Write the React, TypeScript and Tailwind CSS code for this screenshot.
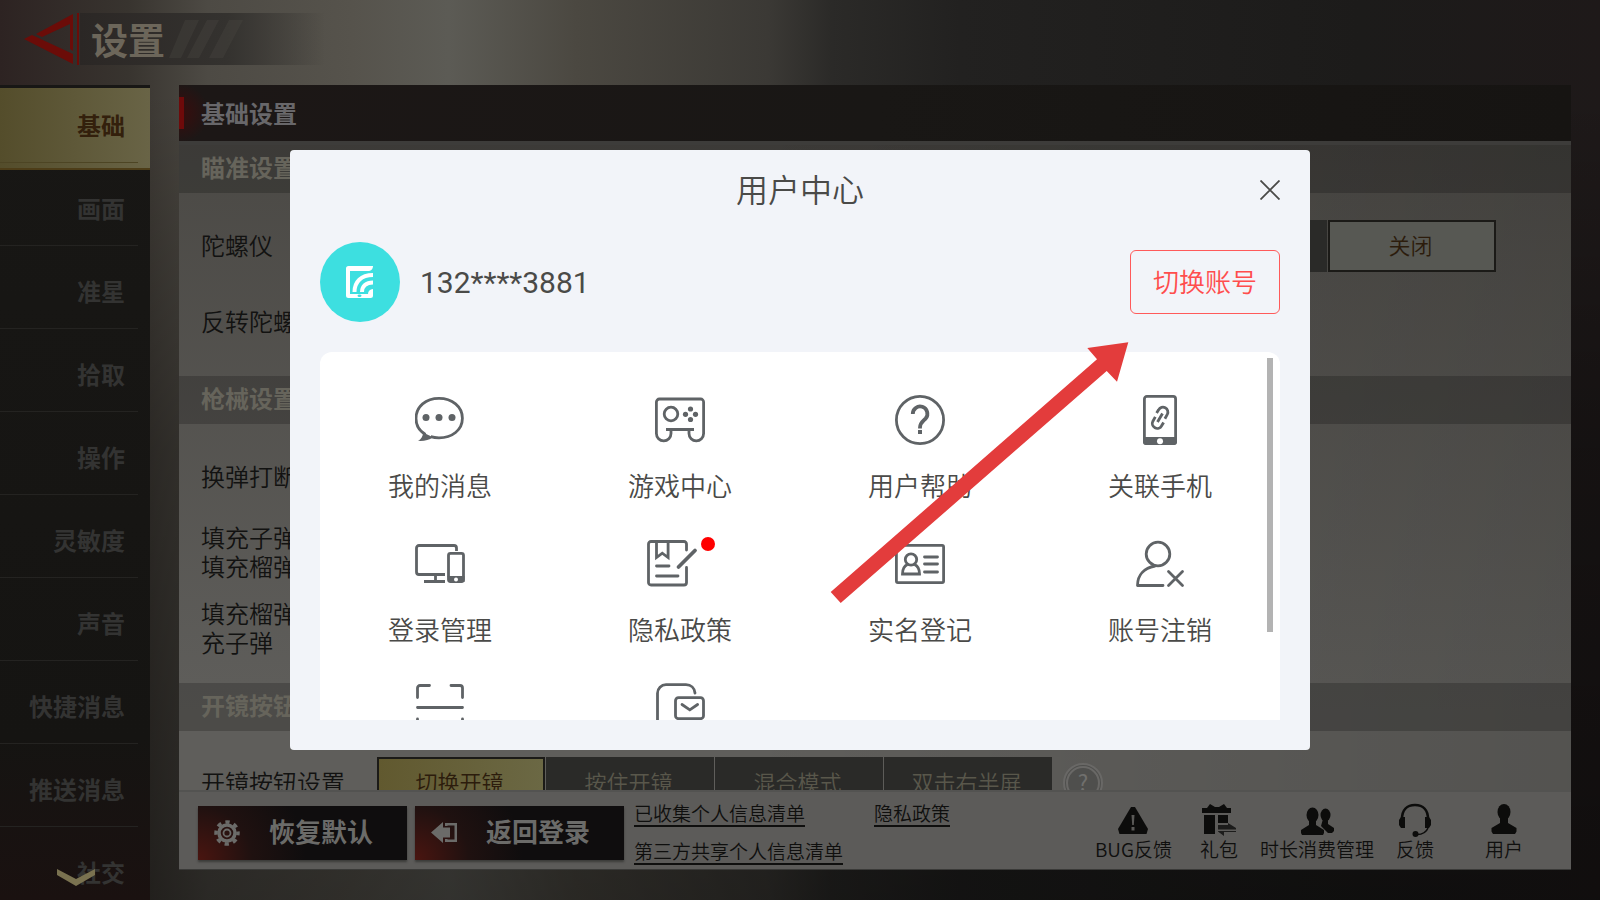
import React, { useState } from "react";
import { clsx } from "clsx";

const tabs = ["基础", "画面", "准星", "拾取", "操作", "灵敏度", "声音", "快捷消息", "推送消息", "社交"];

interface IconProps {
    className?: string;
}

/* ---------- Icons of the user center ---------- */

const MessageIcon = () => (
    <svg viewBox="0 0 50 50" className="size-[50px]" fill="none" stroke="currentColor" strokeWidth="2.8">
        <path d="M10.500 39.500C4.500 36 1 30.500 1 23.500 1 11.500 11 3.300 24 3.300s23.400 8.200 23.400 20S37 42.900 24 42.900c-3 0-5.800-.4-8.300-1.200" />
        <path d="M8 37.500l10 4.700c-4 2.900-9 4-15 3.600 3.200-1.600 5-4.300 5-8.300z" fill="currentColor" stroke="none" />
        <circle cx="11" cy="22.500" r="3.500" fill="currentColor" stroke="none" />
        <circle cx="24" cy="22.500" r="3.500" fill="currentColor" stroke="none" />
        <circle cx="37" cy="22.500" r="3.500" fill="currentColor" stroke="none" />
    </svg>
);

const GameIcon = () => (
    <svg viewBox="0 0 50 50" className="size-[50px]" fill="none" stroke="currentColor" strokeWidth="2.8">
        <path d="M16 34.500v4a7.300 7.300 0 0 1-14.600 0V7a3 3 0 0 1 3-3h41.200a3 3 0 0 1 3 3v31.500a7.300 7.300 0 0 1-14.600 0v-4" />
        <path d="M11 34.500h28" />
        <circle cx="16" cy="19" r="6.800" />
        <g fill="currentColor" stroke="none">
            <circle cx="35.500" cy="14" r="2.600" />
            <circle cx="35.500" cy="24.500" r="2.600" />
            <circle cx="30.500" cy="19.300" r="2.600" />
            <circle cx="40.500" cy="19.300" r="2.600" />
        </g>
    </svg>
);

const HelpIcon = () => (
    <svg viewBox="0 0 50 50" className="size-[50px]" fill="none" stroke="currentColor" strokeWidth="2.8">
        <circle cx="25" cy="25" r="23.600" />
        <path d="M17.800 19a7.300 7.300 0 1 1 13 4.300c-2.200 2.600-5.800 4.200-5.800 9.200v1" strokeWidth="3.800" />
        <path d="M23 35h4v4h-4z" fill="currentColor" stroke="none" />
    </svg>
);

const PhoneIcon = () => (
    <svg viewBox="0 0 50 50" className="size-[50px]" fill="none" stroke="currentColor" strokeWidth="2.8">
        <rect x="9.400" y="1.400" width="31.200" height="47.200" rx="2.500" />
        <path d="M8 42h34v5a3 3 0 0 1-3 3H11a3 3 0 0 1-3-3z" fill="currentColor" stroke="none" />
        <circle cx="25" cy="46.200" r="3" fill="#fff" stroke="none" />
        <path d="M21.600 18l2-3.200a4.900 4.900 0 0 1 8.700 4.600l-2.400 4.300M28.600 27.500l-2 3.300a4.900 4.900 0 0 1-8.700-4.600l2.400-4.300M27.500 18.500l-5 8.500" />
    </svg>
);

const DeviceIcon = () => (
    <svg viewBox="0 0 50 50" className="size-[50px]" fill="none" stroke="currentColor" strokeWidth="2.8">
        <path d="M41.500 12V9a2.500 2.500 0 0 0-2.500-2.500H4A2.500 2.500 0 0 0 1.500 9v24A2.500 2.500 0 0 0 4 35.500h26M20.500 36v7M9 42.500h21" />
        <rect x="33.500" y="14.300" width="15" height="28.200" rx="2" />
        <path d="M32.500 37h17v6H34z" fill="currentColor" stroke="none" />
        <circle cx="41" cy="40.500" r="2" fill="#fff" stroke="none" />
    </svg>
);

const PolicyIcon = () => (
    <svg viewBox="0 0 50 50" className="size-[50px] overflow-visible" fill="none" stroke="currentColor" strokeWidth="2.8" strokeLinecap="round">
        <path d="M31.500 11V5A2.500 2.500 0 0 0 29 2.500H-4A2.500 2.500 0 0 0-6.500 5v38.500A2.500 2.500 0 0 0-4 46h33a2.500 2.500 0 0 0 2.500-2.500v-15" />
        <path d="M1.500 3v15.500l5.800-4.300 5.800 4.300V3" />
        <path d="M1.500 27H14M1.500 37H23" />
        <path d="M23.500 28L40 11.500" strokeWidth="3.800" />
    </svg>
);

const IdCardIcon = () => (
    <svg viewBox="0 0 50 50" className="size-[50px]" fill="none" stroke="currentColor" strokeWidth="2.8">
        <rect x="1.400" y="6.400" width="47.200" height="37.200" rx="1.500" />
        <circle cx="16" cy="20.500" r="5.700" />
        <path d="M12.500 25.500c-3.500 1.500-5 5-5 9.500h17c0-4.500-1.500-8-5-9.500" />
        <path d="M29.500 18h13M29.500 25h13M29.500 33h13" strokeLinecap="round" />
    </svg>
);

const UserRemoveIcon = () => (
    <svg viewBox="0 0 50 50" className="size-[50px]" fill="none" stroke="currentColor" strokeWidth="2.8" strokeLinecap="round" strokeLinejoin="round">
        <circle cx="23" cy="15" r="11.800" />
        <path d="M20 27C9.500 29 2.500 35.500 2.500 46.500H28" />
        <path d="M33.500 32.500l14 14M47.500 32.500l-14 14" />
    </svg>
);

const ScanIcon = () => (
    <svg viewBox="0 0 50 50" className="size-[50px]" fill="none" stroke="currentColor" strokeWidth="2.8" strokeLinecap="round">
        <path d="M2.500 14.500V5A2.500 2.500 0 0 1 5 2.500h9.500M36 2.500h9A2.500 2.500 0 0 1 47.500 5v9.500M2.500 24.500h45M2.500 36v9A2.500 2.500 0 0 0 5 47.500h9.500M47.500 36v9a2.500 2.500 0 0 1-2.500 2.500h-9" />
    </svg>
);

const MailIcon = () => (
    <svg viewBox="0 0 50 50" className="size-[50px]" fill="none" stroke="currentColor" strokeWidth="2.8" strokeLinecap="round">
        <path d="M40 10c-.5-5-4-8.300-9-8.300H11a8.500 8.500 0 0 0-8.500 8.500V40a8.500 8.500 0 0 0 8.500 8.500h20a8.500 8.500 0 0 0 8.500-8.500" />
        <rect x="20.500" y="14.700" width="28" height="21" rx="3" />
        <path d="M27 21.500l7.800 5.300 7.800-5.300" />
    </svg>
);

/* ---------- Icons of the game settings ---------- */

const BackIcon = ({ className }: IconProps) => (
    <svg viewBox="0 0 56 52" className={className} fill="#6b0c08">
        <path d="M49 1v37l-3-2V11L18 24l-6-3z" />
        <path d="M0 26l8-4 41 19v10z" />
        <path d="M53 0h2v52h-2z" />
    </svg>
);

const GearIcon = () => (
    <svg viewBox="0 0 26 26" className="size-[26px]" fill="none" stroke="#6b6b69">
        <circle cx="13" cy="13" r="11" strokeWidth="3.500" strokeDasharray="4.300 4.340" strokeDashoffset="2" />
        <circle cx="13" cy="13" r="8" strokeWidth="3.500" />
        <circle cx="13" cy="13" r="3.500" strokeWidth="1.800" />
    </svg>
);

const LogoutIcon = () => (
    <svg viewBox="0 0 26 26" className="size-[26px]" fill="#6b6b69">
        <path d="M0 12.500L12 2v5.500h7v10h-7V23z" />
        <path d="M14 3h12v19H14v-3h2.500v.5h7v-14h-7V6H14z" />
    </svg>
);

const WarnIcon = () => (
    <svg viewBox="0 0 34 34" className="size-[34px]" fill="#0c0c0b">
        <path d="M15 4h4l13 22-1.500 5h-27L2 26z" />
        <path d="M15.500 12h3l-.7 10h-1.600zM15.500 24h3v3.500h-3z" fill="#5a5957" />
    </svg>
);

const GiftIcon = () => (
    <svg viewBox="0 0 34 34" className="size-[34px]">
        <g fill="#0c0c0b">
            <path d="M0 5h5l3-4 5 3h4l5-3 3 4h4v5H0z" />
            <path d="M2 12h11v19H2zM16 12h10v8H16z" />
        </g>
        <path d="M16 22h10v-2l8 5v1.500H16zM34 29H22v4l-6-4.500V28h18z" fill="#1c1c1b" />
    </svg>
);

const PeopleIcon = () => (
    <svg viewBox="0 0 34 34" className="size-[34px]" fill="#0c0c0b">
        <ellipse cx="25.500" cy="12" rx="5" ry="6.500" />
        <path d="M23 16h5v5l6 4v3l-2 2h-4l-7-7z" />
        <ellipse cx="12.500" cy="12" rx="6" ry="7.500" />
        <path d="M9 17h7v5l8 5v3l-1 2H2l-1-2v-3l8-5z" />
    </svg>
);

const HeadsetIcon = () => (
    <svg viewBox="0 0 34 34" className="size-[34px]" fill="#0c0c0b">
        <path d="M4 16C4 7 9 2 17 2s13 5 13 14" fill="none" stroke="#0c0c0b" strokeWidth="2.6" />
        <path d="M1 17l2-3h4v11H3l-2-3zM33 17l-2-3h-4v11h4l2-3z" />
        <path d="M30 25c-2 5-6 6.500-11 6.500" fill="none" stroke="#0c0c0b" strokeWidth="1.500" />
        <circle cx="17.500" cy="31" r="3" />
    </svg>
);

const PersonIcon = () => (
    <svg viewBox="0 0 34 34" className="size-[34px]" fill="#0c0c0b">
        <ellipse cx="17" cy="9" rx="6.500" ry="8" />
        <path d="M13 14h8v6l8.500 5v3.500L28 31H6l-1.500-2.500V25l8.500-5z" />
    </svg>
);

const services = [
    { label: "我的消息", icon: <MessageIcon /> },
    { label: "游戏中心", icon: <GameIcon /> },
    { label: "用户帮助", icon: <HelpIcon /> },
    { label: "关联手机", icon: <PhoneIcon /> },
    { label: "登录管理", icon: <DeviceIcon /> },
    { label: "隐私政策", icon: <PolicyIcon />, unread: true },
    { label: "实名登记", icon: <IdCardIcon /> },
    { label: "账号注销", icon: <UserRemoveIcon /> },
    { label: "扫一扫", icon: <ScanIcon /> },
    { label: "联系客服", icon: <MailIcon /> },
];

interface OptionsProps {
    items: string[];
    active: string;
    light?: boolean;
}

// Segmented buttons of one setting
const Options: React.FC<OptionsProps> = ({ items, active, light }) => (
    <div className="flex gap-px">
        {items.map((item) => (
            <button
                key={item}
                type="button"
                className={clsx(
                    "h-[52px] w-[168px] pr-[3px] pb-[5px] text-[22px] leading-none font-[350]",
                    item !== active && "bg-[#2a2a28] text-[#59574b]",
                    item === active && "border-2 border-[#1b1a17] text-[#2c1c0c]",
                    item === active && (light ? "bg-[#575853]" : "bg-linear-to-r from-[#61592f] to-[#6b6844]")
                )}
            >
                {item}
            </button>
        ))}
    </div>
);

const SectionTitle: React.FC<{ children: React.ReactNode }> = ({ children }) => (
    <h3 className="flex h-12 items-center bg-black/20 px-[22px] pb-[5px] text-2xl font-bold text-[#66645b]">{children}</h3>
);

const Row: React.FC<{ label: string; children?: React.ReactNode }> = ({ label, children }) => (
    <div className="flex h-[76px] items-center px-[22px]">
        <span className="w-[176px] shrink-0 pb-1 text-2xl leading-[29px] font-[350] whitespace-pre-line text-[#121211]">{label}</span>
        {children}
    </div>
);

const FootButton: React.FC<{ label: string; icon: React.ReactNode }> = ({ label, icon }) => (
    <button
        type="button"
        className="flex h-[54px] w-[209px] items-center bg-[#0f0d0e] bg-[radial-gradient(circle_at_0%_100%,#4a1510,#1f1110_25%,#0f0d0e_50%)] pl-4 shadow-[0_2px_2px_#3b3b39]"
    >
        {icon}
        <span className="flex-1 pr-[5px] pb-[3px] text-center text-[26px] leading-none font-bold text-[#6b6b69]">{label}</span>
    </button>
);

const FootIcon: React.FC<{ label: string; icon: React.ReactNode; className?: string }> = ({ label, icon, className }) => (
    <button type="button" className={clsx("flex flex-col items-center pb-[2px]", className)}>
        {icon}
        <span className="text-[19px] leading-6 font-[350] text-[#0f0f0e]">{label}</span>
    </button>
);

const UserCenter: React.FC<{ onClose: () => void }> = ({ onClose }) => (
    <div role="dialog" aria-label="用户中心" className="relative flex h-[600px] w-full max-w-[1020px] flex-col rounded bg-[#f2f4f9] px-[30px] pb-[30px] text-[#4a4a48]">
        <div className="grid h-20 grid-cols-[20px_1fr_20px] items-center">
            <h2 className="col-start-2 pb-1 text-center text-[32px] leading-none font-[350]">用户中心</h2>
            <button type="button" aria-label="关闭" onClick={onClose}>
                <svg viewBox="0 0 20 20" className="size-5" fill="none" stroke="currentColor" strokeWidth="1.8">
                    <path d="M.5.5l19 19M19.500.5l-19 19" />
                </svg>
            </button>
        </div>

        {/* Account */}
        <div className="mt-3 flex h-20 items-center">
            <div className="flex size-20 items-center justify-center rounded-full bg-[#3ddfe0]">
                <svg viewBox="0 0 28 32" className="h-8 w-7" fill="none" stroke="#fff">
                    <path d="M27 0H2.500A2.500 2.500 0 0 0 0 2.500v27A2.500 2.500 0 0 0 2.500 32H24.500A2.500 2.500 0 0 0 27 29.500V23c-3 .5-5 2-5 5H4V5h18c3 0 5-2 5-5z" fill="#fff" stroke="none" />
                    <path d="M8.500 26C8.500 16 15 9 27 9M16 26c0-6 4-9.500 11-9.500" strokeWidth="4" />
                    <ellipse cx="13.500" cy="29.800" rx="2" ry="1.300" fill="#3ddfe0" stroke="none" />
                </svg>
            </div>
            <span className="ml-5 pt-[2px] font-[Roboto] text-3xl">132****3881</span>
            <button type="button" className="ml-auto h-16 w-[150px] rounded-md border border-[#ff5a5a] pb-[3px] text-[26px] font-[350] text-[#ff4d4d]">
                切换账号
            </button>
        </div>

        {/* Services */}
        <div className="relative mt-[30px] min-h-0 flex-1 overflow-hidden rounded-t-xl bg-white">
            <div className="grid grid-cols-4">
                {services.map((service) => (
                    <button key={service.label} type="button" className="flex h-36 flex-col items-center pt-[43px]">
                        <span className="relative text-[#5f6366]">
                            {service.icon}
                            {service.unread && <span className="absolute -top-[2px] -right-[10px] size-[14px] rounded-full bg-[#ff0000]" />}
                        </span>
                        <span className="mt-5 text-[26px] leading-10 font-[350]">{service.label}</span>
                    </button>
                ))}
            </div>
            <div className="absolute top-[6px] right-[7px] h-[274px] w-[6px] bg-[#b3b3b3]" />
        </div>

        {/* Arrow pointing at the switch button */}
        <svg viewBox="0 0 300 264" className="pointer-events-none absolute top-[191px] right-[181px] h-[264px] w-[300px]" fill="#e33c3c">
            <path d="M1.700 251L268 18.300 258.300 7 299.300 1.300 288 40.700 277.700 30 11.700 262z" />
        </svg>
    </div>
);

export default function App() {
    const [open, setOpen] = useState(true);
    const [tab, setTab] = useState("基础");

    return (
        <div className="relative flex h-screen min-h-[900px] flex-col overflow-hidden bg-[#1b1a19] bg-[linear-gradient(180deg,transparent_10%,rgb(0_0_0/0.3)_50%,rgb(0_0_0/0.45)),linear-gradient(90deg,#2d2322,#38342f_8%,#4d4a44_13%,#56534c_22%,#5c5b55_28%,#4b4841_36%,#3b3935_48%,#2b2a28_52%,#222120_60%,#1c1b1a_85%,#1e1919)] font-['Noto_Sans_CJK_SC',sans-serif]">
            <header className="flex h-[85px] shrink-0 items-start pt-[13px] pl-6">
                <button type="button" aria-label="返回" onClick={() => setOpen(false)}>
                    <BackIcon className="h-[52px] w-14" />
                </button>
                <div className="flex h-[52px] items-center bg-linear-to-r from-[#2b2725] via-[#34322f] via-60% to-transparent pr-20">
                    <h1 className="pl-[11px] text-[37px] leading-none font-bold text-[#6c665a]">设置</h1>
                    <svg viewBox="0 0 76 40" className="ml-1 h-10 w-[76px]" fill="#4a4843" fillOpacity="0.35">
                        <path d="M16 1h14L12 39H0zM38 1h12L30 39H18zM60 1h14L54 39H40z" />
                    </svg>
                </div>
            </header>

            <div className="flex min-h-0 flex-1">
                {/* Tabs */}
                <nav className="relative w-[150px] shrink-0 overflow-hidden bg-linear-to-b from-[#181715] via-[#151412] via-80% to-[#1a1110] pt-[3px]">
                    {tabs.map((item, index) => (
                        <button
                            key={item}
                            type="button"
                            onClick={() => setTab(item)}
                            className={clsx(
                                "flex w-full pr-3 text-2xl font-bold",
                                index === 0 ? "h-[82px] pb-[5px]" : index === 1 ? "h-[76px]" : "h-[83px]",
                                item === tab
                                    ? "border-b-2 border-[#4d3d18] bg-linear-to-r from-[#544d2b] to-[#696446] text-[#33200c]"
                                    : "text-[#333332]"
                            )}
                        >
                            <span
                                className={clsx(
                                    "flex h-full w-full items-center justify-end border-b pr-[13px]",
                                    item === tab ? "border-[#4d4524]" : "border-[#242321]",
                                    index > 1 && "pt-[7px]"
                                )}
                            >
                                {item}
                            </span>
                        </button>
                    ))}
                    <svg viewBox="0 0 38 17" className="absolute bottom-[14px] left-[57px] h-[17px] w-[38px]" fill="#7a7250">
                        <path d="M0 0l19 10L38 0v6L19 17 0 6z" />
                    </svg>
                </nav>

                {/* Settings panel */}
                <main className="mr-[29px] mb-[30px] ml-[29px] flex min-w-0 flex-1 flex-col border-b border-[#3a3a38] bg-[linear-gradient(90deg,transparent_40%,rgb(0_0_0/0.12)),linear-gradient(180deg,#494743,#5f5e5b_80%)]">
                    <h2 className="flex h-14 shrink-0 items-center bg-[#171513] bg-[radial-gradient(circle_at_0%_50%,#3a0c0c,#1c1716_30px,#191715_50%,#161412)] text-2xl font-bold text-[#68676a]">
                        <span className="h-8 w-[5px] bg-[#6e0a0a]" />
                        <span className="pl-[17px]">基础设置</span>
                    </h2>
                    <div className="min-h-0 flex-1 overflow-hidden border-t-4 border-[#3d3c3a]">
                        <SectionTitle>瞄准设置</SectionTitle>
                        <div className="pt-[15px] pb-4">
                            <Row label="陀螺仪">
                                <div className="ml-auto pr-[53px]">
                                    <Options items={["开启", "关闭"]} active="关闭" light />
                                </div>
                            </Row>
                            <Row label="反转陀螺仪" />
                        </div>
                        <SectionTitle>枪械设置</SectionTitle>
                        <div className="pt-[15px] pb-4">
                            <Row label="换弹打断" />
                            <Row label={"填充子弹\n填充榴弹"} />
                            <Row label={"填充榴弹\n充子弹"} />
                        </div>
                        <SectionTitle>开镜按钮</SectionTitle>
                        <div className="pt-[14px]">
                            <Row label="开镜按钮设置">
                                <Options items={["切换开镜", "按住开镜", "混合模式", "双击右半屏"]} active="切换开镜" />
                                <button type="button" className="ml-[11px] size-10 rounded-full border-5 border-double border-[#696866] bg-[#4f4f4d] pb-1 text-[22px] leading-none text-[#706f6d]">
                                    ?
                                </button>
                            </Row>
                        </div>
                    </div>

                    <footer className="flex h-[79px] shrink-0 items-center border-t-2 border-[#535351] bg-[#5c5b59] pt-1 pr-12 pl-[19px]">
                        <div className="flex gap-2">
                            <FootButton label="恢复默认" icon={<GearIcon />} />
                            <FootButton label="返回登录" icon={<LogoutIcon />} />
                        </div>
                        <div className="ml-[10px] grid grid-cols-[240px_auto] justify-items-start gap-y-3 text-[19px] leading-6 font-[350] whitespace-nowrap text-[#0f0f0e]">
                            <a href="#collected" className="border-b-2 border-[#0f0f0e]">已收集个人信息清单</a>
                            <a href="#privacy" className="border-b-2 border-[#0f0f0e]">隐私政策</a>
                            <a href="#shared" className="border-b-2 border-[#0f0f0e]">第三方共享个人信息清单</a>
                        </div>
                        <div className="ml-auto flex">
                            <FootIcon label="BUG反馈" icon={<WarnIcon />} />
                            <FootIcon label="礼包" icon={<GiftIcon />} className="ml-7" />
                            <FootIcon label="时长消费管理" icon={<PeopleIcon />} className="ml-[22px]" />
                            <FootIcon label="反馈" icon={<HeadsetIcon />} className="ml-[22px]" />
                            <FootIcon label="用户" icon={<PersonIcon />} className="ml-[51px]" />
                        </div>
                    </footer>
                </main>
            </div>

            {open && (
                <div className="absolute inset-0 flex items-center justify-center">
                    <UserCenter onClose={() => setOpen(false)} />
                </div>
            )}
        </div>
    );
}
